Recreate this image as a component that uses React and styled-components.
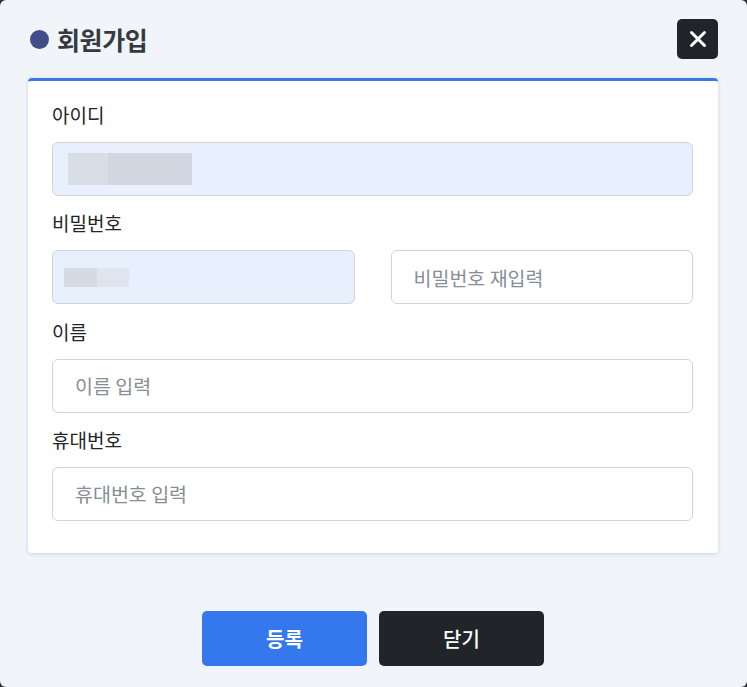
import React from "react";
import styled, { createGlobalStyle } from "styled-components";

const Global = createGlobalStyle`
  html, body { margin: 0; padding: 0; background: #2b2f33; }
  body { font-family: "Noto Sans CJK KR", "Noto Sans", sans-serif; }
  * { box-sizing: border-box; }
`;

const Modal = styled.div`
  width: 747px;
  height: 687px;
  background: #f1f4f8;
  border-radius: 6px;
  padding: 19px 29px 0 28px;
  display: flex;
  flex-direction: column;
`;

const Header = styled.div`
  display: flex;
  align-items: center;
  justify-content: space-between;
  height: 40px;
  margin-bottom: 19px;
`;

const Title = styled.h2`
  margin: 0;
  display: flex;
  align-items: center;
  gap: 8px;
  font-size: 25px;
  font-weight: 700;
  color: #343a40;
  padding-left: 2px;
  letter-spacing: -0.4px;
`;

const Dot = styled.span`
  width: 19px;
  height: 19px;
  border-radius: 50%;
  background: #3f4d8a;
  display: inline-block;
`;

const CloseButton = styled.button`
  width: 41px;
  height: 40px;
  border: none;
  border-radius: 5px;
  background: #212529;
  display: flex;
  align-items: center;
  justify-content: center;
  padding: 0;
  cursor: pointer;
`;

const Card = styled.div`
  background: #fff;
  border-top: 3px solid #3a78e6;
  border-radius: 4px;
  box-shadow: 0 1px 4px rgba(0, 0, 0, 0.14);
  padding: 21px 25px 32px 24px;
  display: flex;
  flex-direction: column;
  gap: 14.3px;
`;

const Group = styled.div`
  display: flex;
  flex-direction: column;
`;

const Label = styled.label`
  font-size: 19px;
  line-height: 26px;
  font-weight: 400;
  color: #212529;
  margin-bottom: 14px;
`;

const Row = styled.div`
  display: grid;
  grid-template-columns: 1fr 1fr;
  gap: 36px;
`;

const Field = styled.div`
  height: 54px;
  border: 1px solid #ced4da;
  border-radius: 6px;
  background: ${(p) => (p.$filled ? "#e8f0fe" : "#fff")};
  display: flex;
  align-items: center;
  padding-left: ${(p) => (p.$filled ? "15px" : "22px")};
  font-size: 19.5px;
  color: #868e96;
`;

const Blur = styled.div`
  display: flex;
  height: ${(p) => p.$h}px;
  margin-left: ${(p) => p.$ml || 0}px;
`;

const BlurPart = styled.span`
  width: ${(p) => p.$w}px;
  height: 100%;
  background: ${(p) => p.$c};
`;

const Footer = styled.div`
  flex: 1;
  display: flex;
  justify-content: center;
  align-items: flex-start;
  gap: 12px;
  padding-top: 58px;
`;

const Button = styled.button`
  width: 165px;
  height: 55px;
  border: none;
  border-radius: 5px;
  background: ${(p) => (p.$dark ? "#212529" : "#3578ee")};
  color: #fff;
  font-family: "Noto Sans CJK KR", sans-serif;
  font-size: 20px;
  font-weight: ${(p) => (p.$dark ? 500 : 700)};
  cursor: pointer;
`;

export default function App() {
  return (
    <>
      <Global />
      <Modal>
        <Header>
          <Title>
            <Dot />
            회원가입
          </Title>
          <CloseButton aria-label="close">
            <svg width="18" height="18" viewBox="0 0 18 18">
              <path d="M2.5 2.5 L15.5 15.5 M15.5 2.5 L2.5 15.5" stroke="#fff" strokeWidth="3" strokeLinecap="round" />
            </svg>
          </CloseButton>
        </Header>
        <Card>
          <Group>
            <Label>아이디</Label>
            <Field $filled>
              <Blur $h={32}>
                <BlurPart $w={40} $c="#d8dde6" />
                <BlurPart $w={84} $c="#d1d6e0" />
              </Blur>
            </Field>
          </Group>
          <Group>
            <Label>비밀번호</Label>
            <Row>
              <Field $filled>
                <Blur $h={19} $ml={-4}>
                  <BlurPart $w={33} $c="#d5dbe5" />
                  <BlurPart $w={32} $c="#dfe5ef" />
                </Blur>
              </Field>
              <Field>비밀번호 재입력</Field>
            </Row>
          </Group>
          <Group>
            <Label>이름</Label>
            <Field>이름 입력</Field>
          </Group>
          <Group>
            <Label>휴대번호</Label>
            <Field>휴대번호 입력</Field>
          </Group>
        </Card>
        <Footer>
          <Button>등록</Button>
          <Button $dark>닫기</Button>
        </Footer>
      </Modal>
    </>
  );
}
